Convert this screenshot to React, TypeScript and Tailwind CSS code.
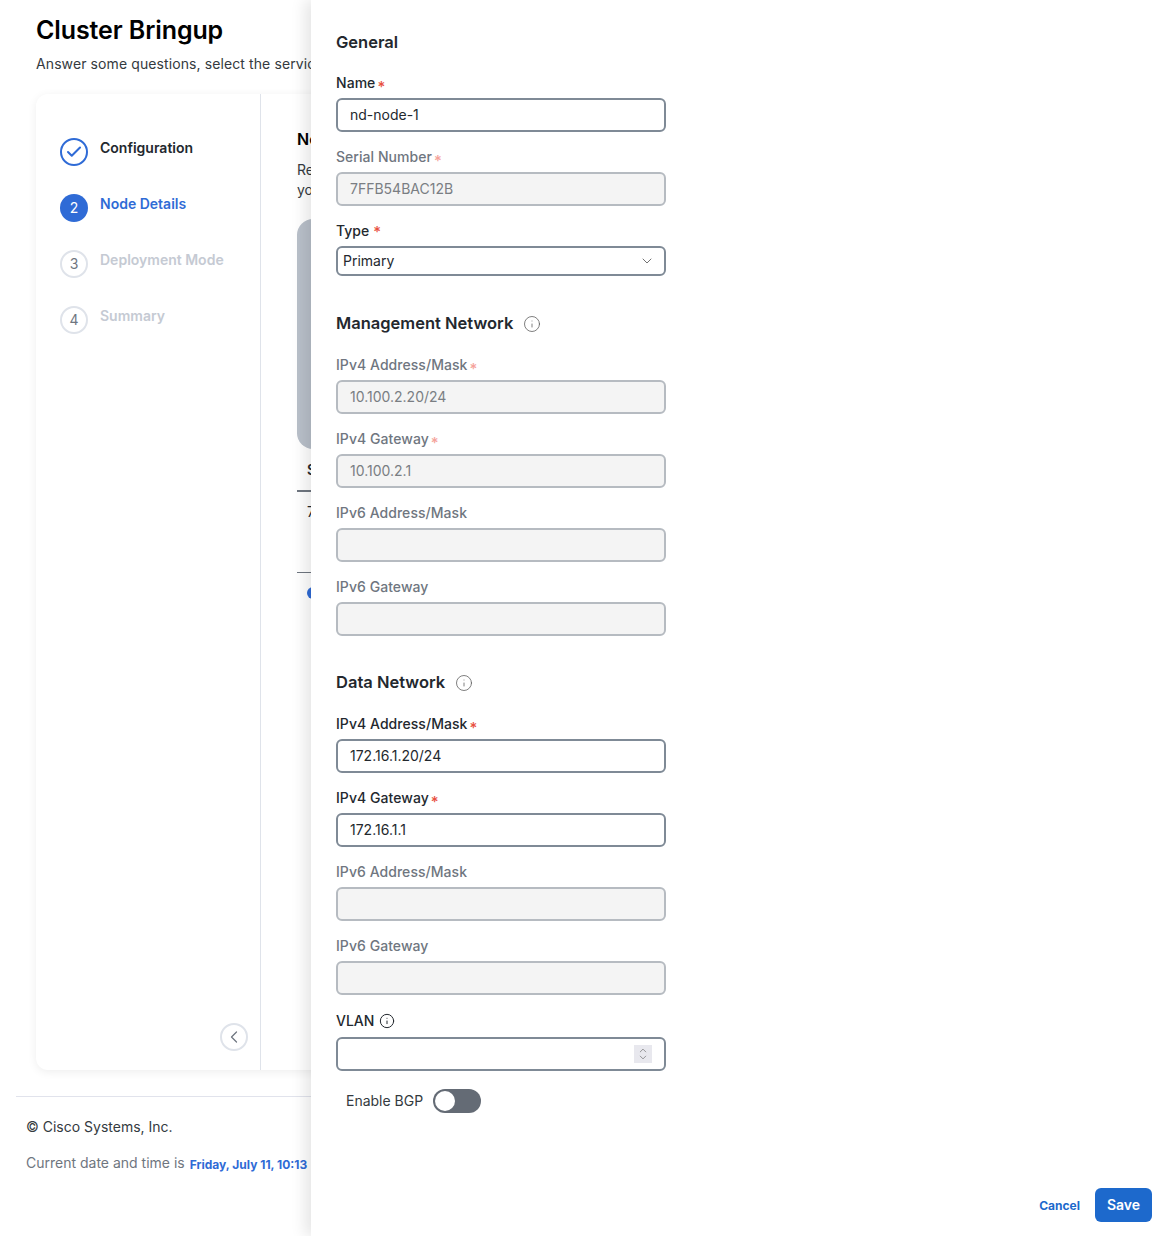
import { Check, ChevronDown, ChevronLeft, ChevronUp, Info } from "lucide-react";

const font = "font-['Inter',_'Liberation_Sans',_sans-serif]";

function Req({ faded }: { faded?: boolean }) {
  return <span className={`ml-0.5 text-[15px] leading-none translate-y-[3px] ${faded ? "text-[#f5a39b]" : "text-[#e8503f]"}`}>*</span>;
}

function Label({ text, required, faded }: { text: string; required?: boolean; faded?: boolean }) {
  return (
    <div className={`flex items-center h-5 mb-[5px] text-sm font-[550] tracking-[0.05px] ${faded ? "text-[#6f7680]" : "text-[#23282e]"}`}>
      {text}
      {required && <Req faded={faded} />}
    </div>
  );
}

function Field({ label, value, required, disabled }: { label: string; value?: string; required?: boolean; disabled?: boolean }) {
  return (
    <div className="mb-[15px]">
      <Label text={label} required={required} faded={disabled} />
      <div
        className={`h-[34px] w-[330px] rounded-md border-2 px-3 flex items-center text-sm ${
          disabled ? "border-[#b6bbc1] bg-[#f4f4f4] text-[#7a7e83]" : "border-[#7f8a96] bg-white text-[#23282e]"
        }`}
      >
        {value}
      </div>
    </div>
  );
}

function Heading({ text, info, className }: { text: string; info?: boolean; className: string }) {
  return (
    <h3 className={`flex items-center h-6 pt-px text-[16.5px] font-semibold text-[#23282e] ${className}`}>
      {text}
      {info && <Info size={18} strokeWidth={1} className="ml-[10px] mt-px text-[#555]" />}
    </h3>
  );
}

const steps = [
  { n: 1, label: "Configuration", state: "done" },
  { n: 2, label: "Node Details", state: "active" },
  { n: 3, label: "Deployment Mode", state: "todo" },
  { n: 4, label: "Summary", state: "todo" },
];

function Stepper() {
  return (
    <div className="flex flex-col gap-7">
      {steps.map((s) => (
        <div key={s.n} className="flex items-start gap-3">
          {s.state === "done" && (
            <div className="w-7 h-7 rounded-full border-2 border-[#2f6bd6] flex items-center justify-center text-[#2f6bd6]">
              <Check size={18} strokeWidth={2.75} />
            </div>
          )}
          {s.state === "active" && (
            <div className="w-7 h-7 rounded-full bg-[#2f6bd6] flex items-center justify-center text-sm text-white">{s.n}</div>
          )}
          {s.state === "todo" && (
            <div className="w-7 h-7 rounded-full border-2 border-[#dfe3ea] flex items-center justify-center text-sm text-[#6f7680]">{s.n}</div>
          )}
          <span
            className={`text-sm leading-5 font-semibold ${
              s.state === "done" ? "text-[#23282e]" : s.state === "active" ? "text-[#2f6bd6]" : "text-[#c5cad3]"
            }`}
          >
            {s.label}
          </span>
        </div>
      ))}
    </div>
  );
}

function Background() {
  return (
    <div className="h-full flex flex-col">
      <div className="pl-9 pt-[14px]">
        <h1 className="text-[25px] leading-8 font-semibold tracking-[-0.1px] text-black">Cluster Bringup</h1>
        <p className="mt-[8px] text-sm leading-5 tracking-[0.1px] text-[#343a40] whitespace-nowrap">
          Answer some questions, select the service
        </p>
      </div>

      <div className="ml-9 mt-5 h-[976px] w-[1100px] shrink-0 rounded-xl bg-white shadow-[0_2px_10px_rgba(0,0,0,0.07)] flex">
        <div className="w-[225px] shrink-0 border-r border-[#dfe3ea] pl-6 pr-3 pt-11 pb-[19px] flex flex-col">
          <Stepper />
          <button className="mt-auto self-end w-7 h-7 rounded-full border-2 border-[#dfe3ea] flex items-center justify-center text-[#6f7680]">
            <ChevronLeft size={20} strokeWidth={1.5} />
          </button>
        </div>

        <div className="flex-1 pl-9 pt-[35px]">
          <h2 className="text-base leading-5 font-semibold text-black">Node</h2>
          <p className="mt-[11px] text-sm leading-5 text-[#343a40]">
            Rev
            <br />
            you
          </p>
          <div className="mt-[19px] h-[230px] rounded-2xl bg-[#b9c0ca]" />
          <div className="h-[43px] px-2.5 pt-px flex items-center border-b-2 border-[#6f7680] text-sm font-semibold text-[#23282e]">Serial</div>
          <div className="h-[81px] px-2.5 pt-[10px] border-b border-[#6f7680] text-sm text-[#23282e]">7FF</div>
          <div className="mt-3.5 ml-2.5 w-3 h-3 rounded-full bg-[#2f6bd6]" />
        </div>
      </div>

      <div className="mt-[26px] ml-4 border-t border-[#e1e3ec] pl-2.5 pt-[20px]">
        <div className="text-sm leading-5 text-[#343a40]">© Cisco Systems, Inc.</div>
        <div className="mt-4 flex items-center text-sm leading-5 text-[#6f7680]">
          Current date and time is
          <span className="ml-[5px] mt-[3px] text-xs font-bold text-[#2f6bd6] whitespace-nowrap">Friday, July 11, 10:13</span>
        </div>
      </div>
    </div>
  );
}

function Drawer() {
  return (
    <aside className="absolute top-0 bottom-0 left-[311px] right-0 bg-white shadow-[-6px_0_14px_rgba(0,0,0,0.1)] pl-[25px] pr-[14px] pt-[30px] pb-[14px] flex flex-col">
      <Heading text="General" className="mb-[19px]" />
      <Field label="Name" value="nd-node-1" required />
      <Field label="Serial Number" value="7FFB54BAC12B" required disabled />
      <div className="mb-[15px]">
        <div className="flex items-center h-5 mb-[5px] text-sm font-[550] text-[#23282e]">
          Type
          <span className="ml-1 text-[15px] leading-none text-[#e8503f]">*</span>
        </div>
        <div className="h-[30px] w-[330px] rounded-md border-2 border-[#7f8a96] pl-[5px] pr-[9px] flex items-center justify-between text-sm text-[#23282e]">
          Primary
          <ChevronDown size={16} strokeWidth={1.25} className="text-[#555]" />
        </div>
      </div>

      <Heading text="Management Network" info className="mt-5 mb-5" />
      <Field label="IPv4 Address/Mask" value="10.100.2.20/24" required disabled />
      <Field label="IPv4 Gateway" value="10.100.2.1" required disabled />
      <Field label="IPv6 Address/Mask" disabled />
      <Field label="IPv6 Gateway" disabled />

      <Heading text="Data Network" info className="mt-[19px] mb-5" />
      <Field label="IPv4 Address/Mask" value="172.16.1.20/24" required />
      <Field label="IPv4 Gateway" value="172.16.1.1" required />
      <Field label="IPv6 Address/Mask" disabled />
      <Field label="IPv6 Gateway" disabled />

      <div className="mt-px">
        <div className="flex items-center h-5 mb-[6px] text-sm font-[550] text-[#23282e]">
          VLAN
          <Info size={16} strokeWidth={1.5} className="ml-[5px] text-[#23282e]" />
        </div>
        <div className="h-[34px] w-[330px] rounded-md border-2 border-[#7f8a96] pr-3 flex items-center justify-end">
          <div className="w-[18px] h-[18px] bg-[#e8e8ee] flex flex-col items-center justify-center text-[#555]">
            <ChevronUp size={12} strokeWidth={1.25} className="-mb-0.5" />
            <ChevronDown size={12} strokeWidth={1.25} className="-mt-0.5" />
          </div>
        </div>
      </div>

      <div className="mt-[18px] pl-2.5 flex items-center gap-2.5 text-sm text-[#343a40]">
        Enable BGP
        <div className="w-12 h-6 rounded-full bg-[#646b75] p-0.5">
          <div className="w-5 h-5 rounded-full bg-white" />
        </div>
      </div>

      <div className="mt-auto flex items-center justify-end gap-[15px]">
        <button className="mt-px text-xs font-bold text-[#1d69cc]">Cancel</button>
        <button className="w-[57px] h-[34px] rounded-md bg-[#1d69cc] text-sm font-semibold text-white">Save</button>
      </div>
    </aside>
  );
}

export default function App() {
  return (
    <div className={`relative h-[1236px] w-full overflow-hidden bg-white ${font}`}>
      <Background />
      <Drawer />
    </div>
  );
}
